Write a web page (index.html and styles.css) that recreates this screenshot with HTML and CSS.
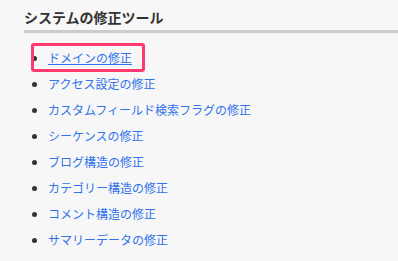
FILE: index.html
```html
<!DOCTYPE html>
<html lang="ja">
<head>
    <meta charset="UTF-8">
    <meta name="viewport" content="width=device-width, initial-scale=1.0">
    <title>システムの修正ツール</title>
    <link rel="stylesheet" href="styles.css">
</head>
<body>
    <div class="panel">
        <h2 class="panel-title">システムの修正ツール</h2>
        <ul class="tool-list">
            <li class="marked"><a href="#" class="current">ドメインの修正</a></li>
            <li><a href="#">アクセス設定の修正</a></li>
            <li><a href="#">カスタムフィールド検索フラグの修正</a></li>
            <li><a href="#">シーケンスの修正</a></li>
            <li><a href="#">ブログ構造の修正</a></li>
            <li><a href="#">カテゴリー構造の修正</a></li>
            <li><a href="#">コメント構造の修正</a></li>
            <li><a href="#">サマリーデータの修正</a></li>
        </ul>
    </div>
</body>
</html>
```

FILE: styles.css
```css
body {
    margin: 0;
    background-color: #f7f7f7;
    font-family: "Noto Sans CJK JP", "Noto Sans", sans-serif;
    color: #333;
}
.panel {
    padding: 7px 0 0 24px;
}
.panel-title {
    margin: 0;
    font-size: 14px;
    line-height: 20px;
    font-weight: bold;
    color: #333;
    padding-bottom: 3px;
    border-bottom: 3px solid #cccccc;
}
.tool-list {
    margin: 12px 0 0;
    padding-left: 24px;
    font-size: 12px;
    line-height: 26px;
}
.tool-list li {
    color: #333;
}
.tool-list a {
    color: #3173ec;
    text-decoration: none;
}
.tool-list a.current {
    text-decoration: underline;
}
.marked {
    position: relative;
}
.marked::after {
    content: "";
    position: absolute;
    left: -17px;
    top: -2px;
    width: 108px;
    height: 23px;
    border: 3px solid #ff3a6f;
    border-radius: 3px;
}
```
